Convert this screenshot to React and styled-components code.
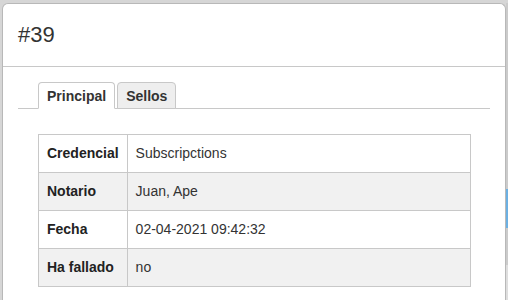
import React from "react";
import styled, { createGlobalStyle } from "styled-components";

const GlobalStyle = createGlobalStyle`
  html, body { margin: 0; padding: 0; }
  body {
    background: #d6d6d6;
    font-family: "Liberation Sans", Arial, sans-serif;
    color: #333;
    overflow: hidden;
  }
  * { box-sizing: border-box; }
`;

const Page = styled.div`
  display: flex;
  width: 508px;
  height: 300px;
  padding: 3px 0 0 2px;
`;

const Modal = styled.div`
  flex: 1;
  background: #fff;
  border: 1px solid #b8b8b8;
  border-bottom: none;
  border-radius: 6px 6px 0 0;
  overflow: hidden;
`;

const Side = styled.div`
  width: 2px;
  display: flex;
  flex-direction: column;
  padding-top: 186px;
  background: #cbcbcb;
`;

const SideBlue = styled.div`
  height: 39px;
  background: #6cb0e2;
`;

const SideGap = styled.div`
  height: 37px;
`;

const SideLight = styled.div`
  flex: 1;
  background: #dedede;
`;

const Header = styled.div`
  padding: 15px;
  border-bottom: 1px solid #c8c8c8;
`;

const Title = styled.h4`
  margin: 0;
  font-size: 22px;
  line-height: 32px;
  font-weight: normal;
  color: #333;
`;

const Body = styled.div`
  padding: 15px;
`;

const TabList = styled.div`
  display: flex;
  gap: 2px;
  padding-left: 20px;
  border-bottom: 1px solid #c8c8c8;
`;

const Tab = styled.div`
  height: 27px;
  margin-bottom: -1px;
  padding: 0 8px;
  display: flex;
  align-items: center;
  font-size: 14px;
  font-weight: bold;
  line-height: 20px;
  color: #333;
  border: 1px solid #c8c8c8;
  border-bottom-color: ${(p) => (p.$active ? "#fff" : "#c8c8c8")};
  border-radius: 4px 4px 0 0;
  background: ${(p) => (p.$active ? "#fff" : "#eeeeee")};
`;

const Pane = styled.div`
  padding: 25px 19px 0 20px;
`;

const Table = styled.table`
  width: 100%;
  border-collapse: collapse;
  font-size: 14px;
  line-height: 21px;
`;

const Row = styled.tr`
  background: ${(p) => (p.$striped ? "#f1f1f1" : "#fff")};
`;

const Label = styled.th`
  width: 72px;
  padding: 8px;
  text-align: left;
  font-weight: bold;
  color: #222;
  border: 1px solid #c8c8c8;
  white-space: nowrap;
`;

const Value = styled.td`
  padding: 8px;
  color: #333;
  border: 1px solid #c8c8c8;
`;

const rows = [
  ["Credencial", "Subscripctions"],
  ["Notario", "Juan, Ape"],
  ["Fecha", "02-04-2021 09:42:32"],
  ["Ha fallado", "no"],
];

export default function App() {
  return (
    <>
      <GlobalStyle />
      <Page>
        <Modal>
          <Header>
            <Title>#39</Title>
          </Header>
          <Body>
            <TabList>
              <Tab $active>Principal</Tab>
              <Tab>Sellos</Tab>
            </TabList>
            <Pane>
              <Table>
                <tbody>
                  {rows.map(([k, v], i) => (
                    <Row key={k} $striped={i % 2 === 1}>
                      <Label>{k}</Label>
                      <Value>{v}</Value>
                    </Row>
                  ))}
                </tbody>
              </Table>
            </Pane>
          </Body>
        </Modal>
        <Side>
          <SideBlue />
          <SideGap />
          <SideLight />
        </Side>
      </Page>
    </>
  );
}
